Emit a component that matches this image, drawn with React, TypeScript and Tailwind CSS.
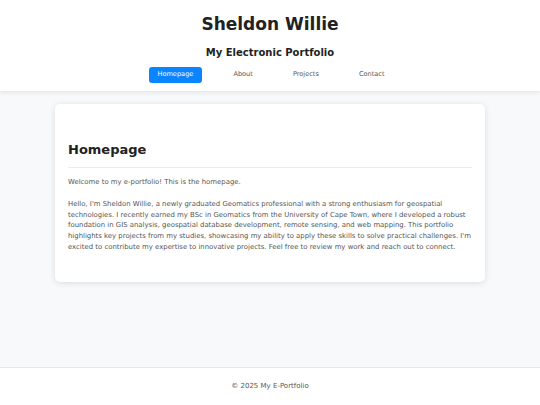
import React from 'react';

const navItems = ['Homepage', 'About', 'Projects', 'Contact'];

export default function App() {
  return (
    <div className="h-[405px] flex flex-col bg-[#f8f9fa] text-[#333]" style={{ fontFamily: '"DejaVu Sans", sans-serif' }}>
      {/* Header */}
      <header className="h-[91px] shrink-0 bg-white shadow-[0_2px_4px_rgba(0,0,0,0.08)] pt-[13px] text-center relative z-10">
        <h1 className="text-[17px] leading-[22px] font-bold text-[#222]">Sheldon Willie</h1>
        <h2 className="mt-[11px] text-[10px] leading-[14px] font-bold text-[#222]">My Electronic Portfolio</h2>
        <nav className="mt-[7px] flex justify-center gap-[23px] pl-[2px]">
          {navItems.map((item, i) => (
            <a
              key={item}
              className={`h-[16px] px-[8.5px] flex items-center justify-center rounded-[3px] text-[6.6px] ${
                i === 0 ? 'bg-[#0a84ff] text-white' : 'text-[#555]'
              }`}
            >
              {item}
            </a>
          ))}
        </nav>
      </header>

      {/* Main */}
      <main className="flex-1 px-[55px] pt-[13px]">
        <div className="bg-white rounded-[5px] shadow-[0_1px_6px_rgba(0,0,0,0.12)] px-[13px] pt-[37px] pb-[29px]">
          <h2 className="text-[13px] leading-[18px] font-bold text-[#222] pb-[8px] border-b border-[#e9ecef]">Homepage</h2>
          <div className="text-[6.9px] leading-[10.8px] text-[#555]">
            <p className="mt-[9px]">Welcome to my e-portfolio! This is the homepage.</p>
            <p className="mt-[11px]">
              Hello, I'm Sheldon Willie, a newly graduated Geomatics professional with a strong enthusiasm for geospatial
              technologies. I recently earned my BSc in Geomatics from the University of Cape Town, where I developed a robust
              foundation in GIS analysis, geospatial database development, remote sensing, and web mapping. This portfolio
              highlights key projects from my studies, showcasing my ability to apply these skills to solve practical challenges. I'm
              excited to contribute my expertise to innovative projects. Feel free to review my work and reach out to connect.
            </p>
          </div>
        </div>
      </main>

      {/* Footer */}
      <footer className="shrink-0 bg-white border-t border-[#e5e7eb] h-[38px] flex items-center justify-center text-[7px] text-[#555]">
        © 2025 My E-Portfolio
      </footer>
    </div>
  );
}
